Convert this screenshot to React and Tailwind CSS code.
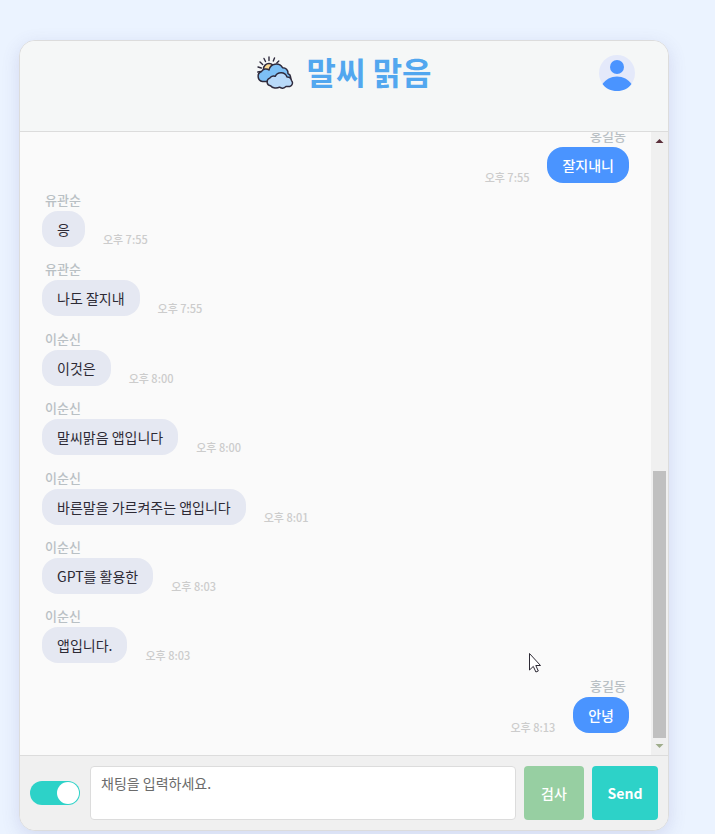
import React from "react";

const messages = [
  { name: "유관순", text: "응", time: "오후 7:55" },
  { name: "유관순", text: "나도 잘지내", time: "오후 7:55" },
  { name: "이순신", text: "이것은", time: "오후 8:00" },
  { name: "이순신", text: "말씨맑음 앱입니다", time: "오후 8:00" },
  { name: "이순신", text: "바른말을 가르켜주는 앱입니다", time: "오후 8:01" },
  { name: "이순신", text: "GPT를 활용한", time: "오후 8:03" },
  { name: "이순신", text: "앱입니다.", time: "오후 8:03" },
  { name: "홍길동", text: "안녕", time: "오후 8:13", mine: true },
];

function WeatherIcon() {
  return (
    <svg className="h-9 w-[38px]" viewBox="0 0 38 36" fill="none" stroke="#2f2b3d" strokeWidth="1.5" strokeLinecap="round" strokeLinejoin="round" aria-hidden="true">
      <path d="M13 2v3.500M8 3.500l1.500 3M4 7l2.700 2.500M2 12l3.300 1M18.500 3l-1.200 3M22.800 6l-2 2M1.800 17l2.700-.5" strokeWidth="1.400" />
      <circle cx="13" cy="14" r="5.500" fill="#fbd995" />
      <path d="M6.500 26.500a5.200 5.200 0 0 1-1-10 5 5 0 0 1 7.500-1.500 7.300 7.300 0 0 1 13.500-2.300 5.300 5.300 0 0 1 5.500 5.800 4.500 4.500 0 0 1 .5 8z" fill="#7dc0f5" />
      <path d="M14.500 30.800a4 4 0 0 1-.8-7.700 4.600 4.600 0 0 1 5.500-1.800 6.500 6.500 0 0 1 11.800.6 4.300 4.300 0 0 1 4.500 3.500 3.600 3.600 0 0 1-1.700 6h-3.800c-1.800 2.200-4.800 2.200-6.500.8-2.500 1.500-7 1.200-9-1.400z" fill="#b9daf9" />
    </svg>
  );
}

function Avatar() {
  return (
    <svg className="h-9 w-9" viewBox="0 0 36 36" aria-hidden="true">
      <circle cx="18" cy="18" r="18" fill="#e4e9fa" />
      <circle cx="18" cy="12" r="7" fill="#4a94ff" />
      <path d="M3.500 29C6.500 24.500 12 21.500 18 21.500S29.500 24.500 32.500 29C29.500 33.500 24 36 18 36S6.500 33.500 3.500 29z" fill="#4a94ff" />
    </svg>
  );
}

function Message({ name, text, time, mine, first }) {
  return (
    <li className={(first ? "h-16 " : "flex-1 ") + (mine ? "flex flex-col items-end" : "flex flex-col items-start")}>
      <span className="mb-0.5 px-[3px] text-[13px] font-medium leading-[18px] text-[#b9c0c4]">{name}</span>
      <div className={mine ? "flex flex-row-reverse items-end gap-[18px]" : "flex items-end gap-[18px]"}>
        <p
          className={
            mine
              ? "rounded-2xl bg-[#4a94ff] px-[15px] py-2 text-sm font-medium leading-5 text-white"
              : "rounded-2xl bg-[#e5e8f2] px-[15px] py-2 text-sm leading-5 text-[#2d2a35]"
          }
        >
          {text}
        </p>
        <time className={mine ? "text-[11px] font-medium leading-3 text-[#cccccc]" : "text-[11px] font-medium leading-4 text-[#cccccc]"}>{time}</time>
      </div>
    </li>
  );
}

export default function App() {
  return (
    <div className="min-h-screen bg-[#ebf3ff] pt-10 pr-[46px] pb-[3px] pl-[19px] font-['Noto_Sans_CJK_KR','Noto_Sans',sans-serif]">
      <main className="overflow-hidden rounded-2xl border border-[#dcdcdc] bg-[#fafafa] shadow-[0_5px_18px_rgba(80,80,160,0.16)]">
        <header className="grid h-[91px] grid-cols-[1fr_auto_1fr] items-start border-b border-[#dcdcdc] bg-[#f5f7f7] px-[33px] pt-[14px]">
          <div />
          <div className="flex h-9 items-center gap-3">
            <WeatherIcon />
            <h1 className="pb-1 text-[32px] font-bold leading-8 text-[#52a7ef]">말씨 맑음</h1>
          </div>
          <button type="button" aria-label="프로필" className="justify-self-end rounded-full">
            <Avatar />
          </button>
        </header>

        <section className="flex h-[623px] overflow-hidden">
          <ul className="-mt-[5px] flex flex-1 flex-col px-[22px] pb-[9px]">
            <Message first mine name="홍길동" text="잘지내니" time="오후 7:55" />
            {messages.map((m, i) => (
              <Message key={i} {...m} />
            ))}
          </ul>
          <div className="flex w-[17px] flex-col items-center bg-[#f0f0f0]" aria-hidden="true">
            <svg className="h-[17px] w-[17px]" viewBox="0 0 17 17">
              <path d="M4.500 11h8L8.500 7z" fill="#5b2f3a" />
            </svg>
            <div className="flex-1" />
            <div className="h-[267px] w-[13px] bg-[#c0c0c0]" />
            <svg className="h-[17px] w-[17px]" viewBox="0 0 17 17">
              <path d="M4.500 6h8L8.500 10z" fill="#9fad8c" />
            </svg>
          </div>
        </section>

        <form className="flex h-[75px] items-center gap-2 border-t border-[#dcdcdc] bg-[#f0f0f0] px-[10px]" onSubmit={(e) => e.preventDefault()}>
          <label className="mr-[2px] flex h-6 w-[50px] cursor-pointer items-center justify-end rounded-full bg-[#2dd2c8] p-px">
            <input type="checkbox" role="switch" aria-label="자동 검사" defaultChecked className="h-[22px] w-[22px] appearance-none rounded-full bg-white" />
          </label>
          <textarea
            aria-label="채팅"
            placeholder="채팅을 입력하세요."
            className="h-[54px] min-w-0 flex-1 resize-none rounded border border-[#dcdcdc] bg-white px-[10px] py-[6px] text-sm leading-5 placeholder:text-[#6b6b6b]"
          />
          <button type="button" className="h-[54px] w-[60px] rounded bg-[#97cfa2] text-sm font-medium text-white">
            검사
          </button>
          <button type="submit" className="h-[54px] w-[66px] rounded bg-[#2dd2c8] text-sm font-bold text-white">
            Send
          </button>
        </form>
      </main>
      <svg className="pointer-events-none absolute top-[653px] left-[529px] h-5 w-3" viewBox="0 0 12 20" aria-hidden="true">
        <path d="M.5.500v16.500l3.800-3.600 2.600 5.600 2.400-1-2.500-5.500h4.700z" fill="#fff" stroke="#2d2a35" />
      </svg>
    </div>
  );
}
